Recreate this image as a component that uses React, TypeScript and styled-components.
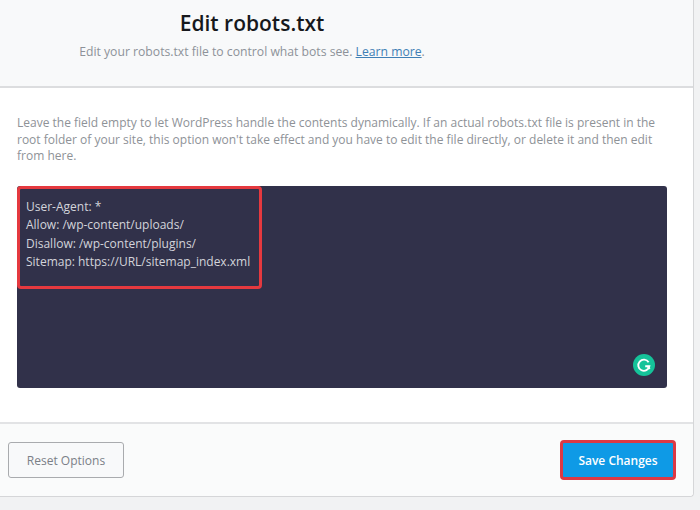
import styled, { createGlobalStyle } from "styled-components";

const GlobalStyle = createGlobalStyle`
  html, body {
    margin: 0;
    padding: 0;
    background: #f1f2f3;
  }
  body {
    width: 700px;
    height: 510px;
    overflow: hidden;
    font-family: "Open Sans", "Noto Sans", sans-serif;
  }
`;

const Panel = styled.div`
  width: 694px;
  height: 497px;
  box-sizing: border-box;
  display: flex;
  flex-direction: column;
  background: #fff;
  border-right: 1px solid #d5d6d8;
  border-bottom: 1px solid #d5d6d8;
  border-bottom-right-radius: 4px;
`;

const Header = styled.div`
  height: 88px;
  box-sizing: border-box;
  flex-shrink: 0;
  padding: 9px 189px 0 0;
  background: #f8f9fa;
  border-bottom: 2px solid #dcdddf;
  text-align: center;
`;

const Title = styled.h1`
  margin: 0;
  font-size: 21px;
  line-height: 28px;
  font-weight: 600;
  color: #16181c;
`;

const Subtitle = styled.p`
  margin: 7px 0 0;
  font-size: 12.2px;
  line-height: 16px;
  color: #8d9299;
`;

const LearnMore = styled.a`
  color: #3f7fb5;
  text-decoration: underline;
`;

const Body = styled.div`
  flex: 1;
  padding: 27px 26px 0 17px;
`;

const Help = styled.p`
  margin: 0;
  font-size: 12px;
  line-height: 16.5px;
  color: #8e9297;
`;

const Editor = styled.div`
  position: relative;
  width: 650px;
  height: 202px;
  box-sizing: border-box;
  margin-top: 21px;
  padding: 12px 9px;
  background: #31314a;
  border-radius: 3px;
`;

const Code = styled.div`
  font-size: 12px;
  line-height: 18.5px;
  color: #d3d4da;
`;

const Highlight = styled.div`
  position: absolute;
  left: 0;
  top: 0;
  width: 245px;
  height: 103px;
  box-sizing: border-box;
  border: 3px solid #e5393f;
  border-radius: 4px;
`;

const GrammarlyBadge = styled.svg`
  position: absolute;
  right: 12px;
  bottom: 12px;
  width: 22px;
  height: 22px;
`;

const Footer = styled.div`
  height: 74px;
  box-sizing: border-box;
  flex-shrink: 0;
  display: flex;
  justify-content: space-between;
  align-items: center;
  padding: 0 17px 0 8px;
  background: #fafbfb;
  border-top: 2px solid #e2e3e5;
  border-bottom-right-radius: 4px;
`;

const ResetButton = styled.button`
  width: 116px;
  height: 36px;
  padding: 0;
  font-family: inherit;
  font-size: 12px;
  color: #7b8087;
  background: #f8f9fa;
  border: 1px solid #a9abae;
  border-radius: 3px;
`;

const SaveButton = styled.button`
  width: 116px;
  height: 40px;
  padding: 0;
  font-family: inherit;
  font-size: 12px;
  font-weight: 600;
  color: #fff;
  background: #0e9ae6;
  border: 3px solid #dc3945;
  border-radius: 4px;
`;

export default function App() {
  return (
    <>
      <GlobalStyle />
      <Panel>
        <Header>
          <Title>Edit robots.txt</Title>
          <Subtitle>
            Edit your robots.txt file to control what bots see. <LearnMore href="#">Learn more</LearnMore>.
          </Subtitle>
        </Header>
        <Body>
          <Help>
            Leave the field empty to let WordPress handle the contents dynamically. If an actual robots.txt file is
            present in the root folder of your site, this option won't take effect and you have to edit the file
            directly, or delete it and then edit from here.
          </Help>
          <Editor>
            <Code>
              User-Agent: *
              <br />
              Allow: /wp-content/uploads/
              <br />
              Disallow: /wp-content/plugins/
              <br />
              Sitemap: https://URL/sitemap_index.xml
            </Code>
            <Highlight />
            <GrammarlyBadge viewBox="0 0 22 22">
              <circle cx="11" cy="11" r="11" fill="#15c39a" />
              <path
                d="M15.6 8.2A5.6 5.6 0 1 0 16.4 12.2H12.2"
                fill="none"
                stroke="#fff"
                strokeWidth="1.9"
              />
              <path d="M14.4 12.2l2.4 2.6" fill="none" stroke="#fff" strokeWidth="1.9" />
            </GrammarlyBadge>
          </Editor>
        </Body>
        <Footer>
          <ResetButton>Reset Options</ResetButton>
          <SaveButton>Save Changes</SaveButton>
        </Footer>
      </Panel>
    </>
  );
}
